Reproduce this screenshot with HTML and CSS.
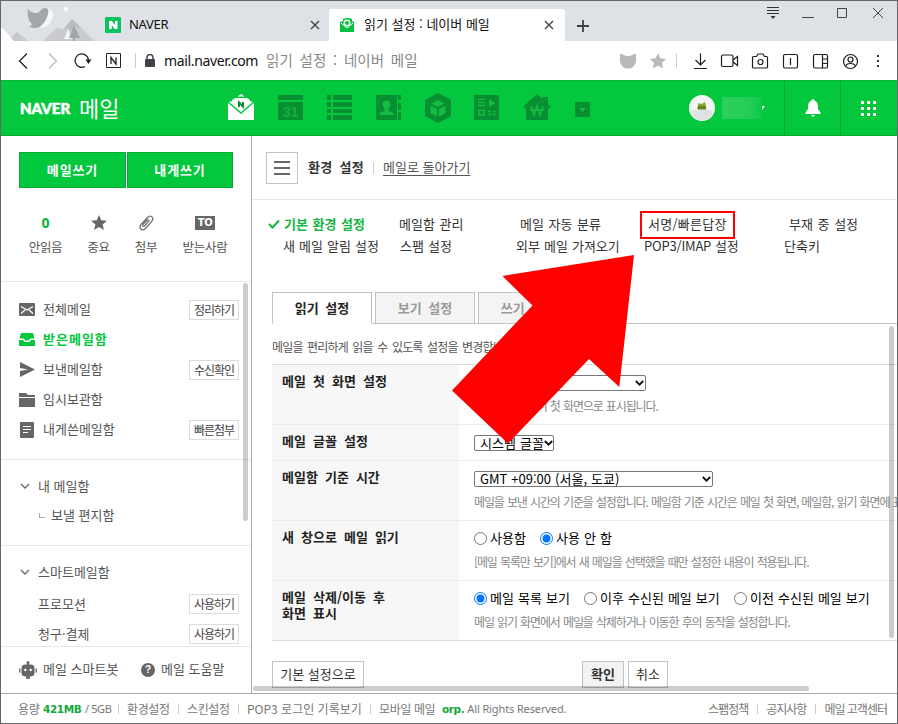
FILE: index.html
```html
<!DOCTYPE html>
<html lang="ko">
<head>
    <meta charset="UTF-8">
    <meta name="viewport" content="width=device-width, initial-scale=1.0">
    <title>읽기 설정 : 네이버 메일</title>
    <link rel="stylesheet" href="styles.css">
</head>
<body>
<div class="window">

    <!-- 탭 -->
    <div class="tabbar">
        <svg class="skin" width="98" height="40" viewBox="1 1 98 40">
            <path d="M1 27L15 41H1z" fill="#fff"/>
            <path d="M11 38l6-6 11 9H14z" fill="#c6c8cc"/>
            <path d="M43 41l15-14 5 3 9-11 23 22z" fill="#c9cbd0"/>
            <path d="M63 30l9-11 10 10-7-3-4 5-3-4z" fill="#b9bcc1"/>
            <path d="M64 39l4-10 4 10z" fill="#f5f5f6"/>
            <path d="M69 38l5-13 6 13h-5v3h-2v-3z" fill="#a3a6ab"/>
            <circle cx="66" cy="9" r="2" fill="#fff"/>
            <path d="M45 8c4 0 8 2 8 7 0 7-6 13-14 13 4-4 8-10 6-20z" fill="#f7f7f8"/>
            <path d="M28 9c3 4 8 5 11 3 2-1 2-4 6-4 3 0 4 2 3 6-2 8-7 14-13 14-3 0-5-1-6-2 2 0 3-1 3-2-4-4-5-9-4-15z" fill="#a4a7aa"/>
        </svg>
        <div class="tab tab-first">
            <svg width="16" height="16" viewBox="0 0 16 16"><rect width="16" height="16" rx="1" fill="#0bc162"/><path d="M4 4h3l3 4V4h2.500v8H9.500L6.800 8v4H4z" fill="#fff"/></svg>
            <span class="tab-title">NAVER</span>
            <svg class="close" width="10" height="10" viewBox="0 0 10 10"><path d="M1 1l8 8M9 1L1 9"/></svg>
        </div>
        <div class="tab tab-active">
            <svg width="14" height="14" viewBox="0 0 14 14"><path d="M0 4l3-1V1l3-1h3l3 1v2l2 1v10H0z" fill="#05c13f"/><path d="M1 5l6 5 6-5" fill="none" stroke="#fff"/><circle cx="7" cy="5" r="2.700" fill="#05c13f" stroke="#fff" stroke-width="1.500"/></svg>
            <span class="tab-title">읽기 설정 : 네이버 메일</span>
            <svg class="close" width="10" height="10" viewBox="0 0 10 10"><path d="M1 1l8 8M9 1L1 9"/></svg>
        </div>
        <svg class="newtab" width="12" height="12" viewBox="0 0 12 12"><path d="M6 0v12M0 6h12" stroke="#3c3f43" stroke-width="1.800"/></svg>
        <div class="winbuttons">
            <svg width="12" height="12" viewBox="0 0 12 12"><path d="M0 .5h12M0 3.500h12M0 6.500h12" stroke="#333"/><path d="M3.500 9h5L6 12z" fill="#333"/></svg>
            <svg width="12" height="12" viewBox="0 0 12 12"><path d="M0 10.500h12" stroke="#444"/></svg>
            <svg width="10" height="10" viewBox="0 0 10 10"><path d="M.5.500h9v9h-9z" fill="none" stroke="#444"/></svg>
            <svg width="10" height="10" viewBox="0 0 10 10"><path d="M0 0l10 10M10 0L0 10" stroke="#444"/></svg>
        </div>
    </div>

    <!-- 주소창 -->
    <div class="address">
        <svg class="nav-icons" width="108" height="18" viewBox="0 0 108 18">
            <g fill="none" stroke="#222" stroke-width="1.300">
                <path d="M9 1.500L1.500 9 9 16.500"/>
                <path d="M31 1.500L38.500 9 31 16.500" stroke="#bbb"/>
                <path d="M67 14.500A6.700 6.700 0 1 1 70.500 9"/>
                <path d="M88.500 1.500h14v14h-14z" stroke-width="1"/>
                <path d="M93 12V5.500l5 6.500V5.500"/>
            </g>
            <path d="M67.500 7.500h6l-3 4.500z" fill="#222"/>
        </svg>
        <i class="vline"></i>
        <svg class="lock" width="10" height="13" viewBox="0 0 10 13"><rect y="5" width="10" height="8" rx="1" fill="#3f4349"/><path d="M2 6V3.500a3 3 0 0 1 6 0V6" fill="none" stroke="#3f4349" stroke-width="1.500"/></svg>
        <span class="host">mail.naver.com</span>
        <span class="page-title">읽기 설정 : 네이버 메일</span>
        <svg class="tools" width="264" height="18" viewBox="0 0 264 18">
            <g fill="#b9b9b9">
                <path d="M0 2.500Q1 1.500 2 2l4 2h4l4-2q1-.5 2 .5v6c0 4-3 7.500-6 8H6c-3-.500-6-4-6-8z"/>
                <path d="M38 1l2.400 5.300 5.800.6-4.300 3.800 1.200 5.800-5.100-3-5.100 3 1.200-5.800-4.300-3.800 5.800-.6z"/>
            </g>
            <path d="M56.500 1.500v15" stroke="#ccc"/>
            <g fill="none" stroke="#1d1d1d" stroke-width="1.200">
                <path d="M80.500 1.500v11M75.500 8l5 5 5-5M74 16.500h13"/>
                <rect x="101.500" y="3" width="11.500" height="11.500" rx="1.500"/><path d="M113 8l4.500-3.500v9L113 10"/>
                <path d="M132.500 5.500q0-1 1-1h3l1.500-2.500h5l1.500 2.500h2q1 0 1 1v9.500q0 1-1 1h-13q-1 0-1-1z"/><circle cx="140.500" cy="10" r="2.500"/>
                <rect x="163.500" y="2.500" width="14" height="13.500" rx="1.500"/><path d="M170.500 6v7"/>
                <rect x="193.500" y="2.500" width="14" height="13.500" rx="1.500"/><path d="M202.500 2.500V16M202.500 7h5M202.500 11.500h5"/>
                <circle cx="230.500" cy="9.500" r="7"/><circle cx="230.500" cy="7.500" r="2.500"/><path d="M225.500 14.500c1-4 9-4 10 0"/>
            </g>
            <path d="M257 3h2v2h-2zM257 8h2v2h-2zM257 13h2v2h-2z" fill="#333"/>
        </svg>
    </div>

    <!-- 상단 메뉴 -->
    <div class="gnb">
        <span class="logo">NAVER</span>
        <span class="logo-mail">메일</span>
        <div class="services">
            <svg class="mail" width="26" height="28" viewBox="0 0 26 28">
                <path d="M0 9l3-2 10 9 10-9 3 2v17H0z" fill="#fff"/>
                <path d="M4 6l3-2h12l3 2v2l-9 9-9-9z" fill="#fff"/><path d="M9.500 2.500L13 0l3.500 2.500z" fill="#fff"/>
                <path d="M0 8l13 11L26 8" fill="none" stroke="#03c73c" stroke-width="1.500"/>
                <path d="M11 13V8.500l4 4V8" fill="none" stroke="#078e30" stroke-width="2"/>
            </svg>
            <svg class="dark" width="26" height="28" viewBox="0 0 26 28"><path d="M0 1h25v5H0zM0 8h25v18H0z"/><text x="12.500" y="22.500" text-anchor="middle" class="cal-day">31</text></svg>
            <svg class="dark" width="26" height="28" viewBox="0 0 26 28"><path d="M0 1h4v5H0zM6 1h19v5H6zM0 8h4v5H0zM6 8h19v5H6zM0 15h4v4H0zM6 15h19v4H6zM0 21h4v5H0zM6 21h19v5H6z"/></svg>
            <svg class="dark" width="26" height="28" viewBox="0 0 26 28"><path d="M0 1h21v25H0zM22 1h3v5h-3zM22 9h3v7h-3zM22 18h3v8h-3z"/><path class="light" d="M10.500 6.500c5 0 4.500 6 2 8.500v2l5 2v2h-14v-2l5-2v-2C6 12.500 5.500 6.500 10.500 6.500z"/></svg>
            <svg class="dark" width="26" height="28" viewBox="0 0 26 28"><path d="M13-1l13 7v16l-13 7-13-7V6z"/><path class="light" d="M13 6l6.500 3.500L13 13 6.500 9.500zM5.500 11.500L12 15v7.500L5.500 19zM20.500 11.500L14 15v7.500l6.500-3.500z"/></svg>
            <svg class="dark" width="26" height="28" viewBox="0 0 26 28"><path d="M0 1h25v25H0z"/><path d="M4 5.500h7M4 8.500h7M4 11.500h7M14 17.500h3M18.500 17.500h3M14 20.500h3M18.500 20.500h3M5 16.500h5v4.500H5z" fill="none" stroke="#15bb42" stroke-width="1.700"/><path d="M15 5v8l6.500-4z" class="light"/></svg>
            <svg class="dark" width="28" height="28" viewBox="0 0 28 28"><path d="M14 0l6 5V3h5v7l3 3-1 1.500h-2V26H3V14.500H1L0 13z"/><path d="M8 12l3 9 3-9 3 9 3-9M7 16h14" fill="none" stroke="#12b83f" stroke-width="1.800"/></svg>
            <svg class="dark more" width="15" height="15" viewBox="0 0 15 15"><path d="M0 0h15v15H0z"/><path class="light" d="M4 6h7l-3.500 4z"/></svg>
        </div>
        <div class="profile">
            <svg width="26" height="26" viewBox="0 0 26 26"><circle cx="13" cy="13" r="13" fill="#f4f5f5"/><path d="M2 16q11-3 22 0-2 9-11 9T2 16z" fill="#dfe2e2"/><path d="M8 14l1.500-6 3 1 3.500-2 1.500 7z" fill="#8aa52c"/><path d="M9 11h8v3.500H9z" fill="#68832a"/></svg>
            <span class="nick"></span>
            <svg class="caret" width="3" height="4" viewBox="0 0 3 4"><path d="M0 0h3L0 4z" fill="#fff"/></svg>
        </div>
        <div class="gnb-cell"><svg width="16" height="18" viewBox="0 0 16 18"><path d="M6.500 1.500h3C13 3 13 6 13 10l2.500 3.500V15H.5v-1.500L3 10c0-4 0-7 3.500-8.500zM6 16h4l-1 1.500H7z" fill="#fff"/><circle cx="8" cy="1.500" r="1.500" fill="#fff"/></svg></div>
        <div class="gnb-cell"><svg width="15" height="15" viewBox="0 0 15 15"><path d="M0 0h3v3H0zM6 0h3v3H6zM12 0h3v3h-3zM0 6h3v3H0zM6 6h3v3H6zM12 6h3v3h-3zM0 12h3v3H0zM6 12h3v3H6zM12 12h3v3h-3z" fill="#fff"/></svg></div>
    </div>

    <div class="content">
        <!-- 왼쪽 메뉴 -->
        <div class="side">
            <div class="write">
                <a class="write-btn">메일쓰기</a>
                <a class="write-btn">내게쓰기</a>
            </div>
            <div class="quick">
                <div class="quick-item q1"><b>0</b><span>안읽음</span></div>
                <div class="quick-item q2"><svg width="16" height="16" viewBox="0 0 16 16"><path d="M8 0l2.200 5.300 5.800.4-4.400 3.700L13 15l-5-3-5 3 1.400-5.600L0 5.700l5.800-.4z" fill="#666"/></svg><span>중요</span></div>
                <div class="quick-item q3"><svg width="15" height="16" viewBox="0 0 15 16"><path d="M2.500 9l6-6.500c3-3 7 0 4.500 3.500l-6.500 7.500c-3 3-7.500 0-4.500-4l6-6.500M10.500 5l-5 6c-1 1-2.500 0-1.500-1.500L9 4" fill="none" stroke="#777" stroke-width="1.300"/></svg><span>첨부</span></div>
                <div class="quick-item q4"><i class="to">TO</i><span>받는사람</span></div>
            </div>
            <div class="folders">
                <div class="folder"><svg width="16" height="13" viewBox="0 0 16 13"><rect width="16" height="13" rx="1" fill="#666"/><path d="M2 3.500l6 3.500 6-3.500M2 10.500L6 7M14 10.500L10 7" fill="none" stroke="#fff" stroke-width="1.200"/></svg><span>전체메일</span><a class="mini">정리하기</a></div>
                <div class="folder on"><svg width="16" height="13" viewBox="0 0 16 13"><path d="M2 0h12l1.500 5.500H11l-1 2H6l-1-2H.5zM0 7h4l1.500 2h5L12 7h4v6H0z" fill="#03c73c"/></svg><span>받은메일함</span></div>
                <div class="folder"><svg width="16" height="15" viewBox="0 0 16 15"><path d="M1 0l15 7.500L1 15V9l8-1.500L1 6z" fill="#666"/></svg><span>보낸메일함</span><a class="mini">수신확인</a></div>
                <div class="folder"><svg width="16" height="14" viewBox="0 0 16 14"><path d="M0 0h7l2 2h7v2H0zM0 5h16v9H0z" fill="#666"/></svg><span>임시보관함</span></div>
                <div class="folder"><svg width="16" height="16" viewBox="0 0 16 16"><rect x="1" width="14" height="16" rx="1" fill="#666"/><path d="M4 4.500h8M4 7.500h8M4 10.500h5" stroke="#fff" stroke-width="1.200"/></svg><span>내게쓴메일함</span><a class="mini">빠른첨부</a></div>
            </div>
            <div class="group mine">
                <div class="group-head"><svg width="10" height="6" viewBox="0 0 10 6"><path d="M1 1l4 4 4-4"/></svg><span>내 메일함</span></div>
                <div class="group-sub"><i class="branch"></i><span>보낼 편지함</span></div>
            </div>
            <div class="group smart">
                <div class="group-head"><svg width="10" height="6" viewBox="0 0 10 6"><path d="M1 1l4 4 4-4"/></svg><span>스마트메일함</span></div>
                <div class="group-item"><span>프로모션</span><a class="mini">사용하기</a></div>
                <div class="group-item"><span>청구·결제</span><a class="mini">사용하기</a></div>
            </div>
            <div class="side-bottom">
                <svg width="18" height="18" viewBox="0 0 18 18"><path d="M8 2h2v2H8z" fill="#666"/><circle cx="9" cy="1.500" r="1.500" fill="#666"/><rect x="2.500" y="3.500" width="13" height="12" rx="4" fill="#666"/><path d="M0 7.500h1.500v4H0zM16.500 7.500H18v4h-1.500zM7 15h4v3H7z" fill="#777"/><circle cx="6.300" cy="9" r="1.200" fill="#fff"/><circle cx="11.700" cy="9" r="1.200" fill="#fff"/></svg>
                <span class="bot">메일 스마트봇</span>
                <i class="help">?</i>
                <span>메일 도움말</span>
            </div>
            <i class="scroll scroll-side"></i>
        </div>

        <!-- 환경 설정 -->
        <div class="main">
            <div class="main-head">
                <a class="burger"><i></i><i></i><i></i></a>
                <h1>환경 설정</h1>
                <i class="vline"></i>
                <a class="back">메일로 돌아가기</a>
            </div>
            <div class="menu">
                <div class="menu-row row1">
                    <a class="current"><svg width="12" height="10" viewBox="0 0 12 10"><path d="M1 5l3.500 3.500L11 1.500" fill="none" stroke="#14b541" stroke-width="2"/></svg>기본 환경 설정</a>
                    <a>메일함 관리</a>
                    <a>메일 자동 분류</a>
                    <a><span class="marked">서명/빠른답장</span></a>
                    <a>부재 중 설정</a>
                </div>
                <div class="menu-row row2">
                    <a>새 메일 알림 설정</a>
                    <a>스팸 설정</a>
                    <a>외부 메일 가져오기</a>
                    <a class="pop">POP3/IMAP 설정</a>
                    <a>단축키</a>
                </div>
            </div>
            <div class="tabs">
                <a class="tabs-item tabs-on">읽기 설정</a>
                <a class="tabs-item">보기 설정</a>
                <a class="tabs-item">쓰기 설정</a>
            </div>
            <p class="desc">메일을 편리하게 읽을 수 있도록 설정을 변경합니다.</p>
            <div class="settings">
                <div class="set-row tall">
                    <div class="set-name">메일 첫 화면 설정</div>
                    <div class="set-body">
                        <div class="control"><span class="select s-first">받은메일함<svg width="9" height="6" viewBox="0 0 9 6"><path d="M.8 1l3.700 3.700L8.200 1"/></svg></span></div>
                        <p>선택한 메일함이 첫 화면으로 표시됩니다.</p>
                    </div>
                </div>
                <div class="set-row">
                    <div class="set-name">메일 글꼴 설정</div>
                    <div class="set-body">
                        <div class="control"><span class="select s-font">시스템 글꼴<svg width="9" height="6" viewBox="0 0 9 6"><path d="M.8 1l3.700 3.700L8.200 1"/></svg></span></div>
                    </div>
                </div>
                <div class="set-row tall">
                    <div class="set-name">메일함 기준 시간</div>
                    <div class="set-body">
                        <div class="control"><span class="select s-time">GMT +09:00 (서울, 도쿄)<svg width="9" height="6" viewBox="0 0 9 6"><path d="M.8 1l3.700 3.700L8.200 1"/></svg></span></div>
                        <p>메일을 보낸 시간의 기준을 설정합니다. 메일함 기준 시간은 메일 첫 화면, 메일함, 읽기 화면에 표시됩니다.</p>
                    </div>
                </div>
                <div class="set-row tall">
                    <div class="set-name">새 창으로 메일 읽기</div>
                    <div class="set-body">
                        <div class="control">
                            <label class="r-use"><input type="radio" name="newwin">사용함</label>
                            <label><input type="radio" name="newwin" checked>사용 안 함</label>
                        </div>
                        <p>[메일 목록만 보기]에서 새 메일을 선택했을 때만 설정한 내용이 적용됩니다.</p>
                    </div>
                </div>
                <div class="set-row tall">
                    <div class="set-name">메일 삭제/이동 후<br>화면 표시</div>
                    <div class="set-body">
                        <div class="control">
                            <label class="r-list"><input type="radio" name="after" checked>메일 목록 보기</label>
                            <label class="r-next"><input type="radio" name="after">이후 수신된 메일 보기</label>
                            <label><input type="radio" name="after">이전 수신된 메일 보기</label>
                        </div>
                        <p>메일 읽기 화면에서 메일을 삭제하거나 이동한 후의 동작을 설정합니다.</p>
                    </div>
                </div>
            </div>
            <div class="buttons">
                <a class="btn btn-reset">기본 설정으로</a>
                <a class="btn btn-ok">확인</a>
                <a class="btn btn-cancel">취소</a>
            </div>
            <i class="scroll scroll-main"></i>
            <i class="scroll scroll-bottom"></i>
        </div>
    </div>

    <div class="footer">
        <span class="f-cap">용량</span><b class="f-used">421MB</b><span class="f-total">/ 5GB</span>
        <a class="bar f-env">환경설정</a>
        <a class="bar f-env">스킨설정</a>
        <a class="bar f-pop">POP3 로그인 기록보기</a>
        <a class="bar f-mobile">모바일 메일</a>
        <b class="f-corp">orp.</b><span class="f-rights">All Rights Reserved.</span>
        <div class="policy">
            <a>스팸정책</a>
            <a class="bar">공지사항</a>
            <a class="bar f-center">메일 고객센터</a>
        </div>
    </div>

    <svg class="arrow" width="184" height="190" viewBox="451 254 184 190"><path d="M634 255L619.300 387 589 359 508 443.500 452 390.500 532.500 305.500 502.500 276z" fill="#f00"/></svg>
</div>
</body>
</html>
```

FILE: styles.css
```css
* {
    box-sizing: border-box;
}
body {
    margin: 0;
    font-family: "Noto Sans CJK KR", sans-serif;
    font-size: 13px;
    line-height: 20px;
    color: #333;
    background: #fff;
    overflow: hidden;
}
svg {
    display: block;
    flex: none;
}
i {
    font-style: normal;
}
p, h1 {
    margin: 0;
}
a, span, label {
    white-space: nowrap;
}
.window {
    position: relative;
    display: flex;
    flex-direction: column;
    width: 898px;
    height: 724px;
    border: 1px solid #65656b;
    overflow: hidden;
}

/* 탭 */
.tabbar {
    display: flex;
    height: 40px;
    background: #dee1e6;
}
.tab {
    display: flex;
    align-items: center;
    height: 32px;
    margin-top: 8px;
    color: #111;
}
.tab-first {
    width: 231px;
    padding: 0 10px 0 6px;
}
.tab-active {
    width: 236px;
    margin-left: -1px;
    padding: 0 11px;
    background: #fff;
    border-radius: 3px 3px 0 0;
}
.tab-title {
    margin-left: 10px;
    padding-bottom: 2px;
    flex: 1;
}
.tab-first .tab-title {
    margin-left: 8px;
    font-family: "Noto Sans", sans-serif;
    letter-spacing: -0.3px;
}
.close path {
    stroke: #444;
    stroke-width: 1.4;
}
.newtab {
    margin: 19px 0 0 12px;
}
.winbuttons {
    display: flex;
    flex: 1;
    justify-content: flex-end;
    gap: 23px;
    padding: 6px 14px 0 0;
}
.winbuttons svg:nth-child(3) {
    margin-top: 1px;
}
.winbuttons svg:nth-child(4) {
    margin-top: 1px;
    margin-left: 3px;
}

/* 주소창 */
.address {
    display: flex;
    align-items: center;
    height: 39px;
    padding-left: 17px;
}
.vline {
    width: 1px;
    height: 15px;
    background: #ccc;
}
.address .vline {
    margin-left: 9px;
}
.lock {
    margin-left: 9px;
}
.host {
    width: 94px;
    margin-left: 9px;
    font-family: "Noto Sans", sans-serif;
    font-size: 14px;
    letter-spacing: -0.35px;
    color: #111;
}
.page-title {
    margin-left: 8px;
    padding-bottom: 2px;
    font-size: 14.5px;
    letter-spacing: 0.1px;
    word-spacing: 2.5px;
    color: #888;
}
.tools {
    margin-left: auto;
    margin-right: 13px;
}

/* 상단 메뉴 */
.gnb {
    display: flex;
    align-items: center;
    height: 56px;
    padding-right: 1px;
    background: #03c73c;
    border-top: 1px solid #09b53c;
    border-bottom: 1px solid #05a833;
    color: #fff;
}
.logo {
    width: 53px;
    margin-left: 19px;
    font-family: "Lato", sans-serif;
    font-size: 15px;
    font-weight: 900;
    -webkit-text-stroke: 0.6px #fff;
}
.logo-mail {
    width: 40px;
    margin-left: 6px;
    padding-bottom: 2px;
    font-size: 22px;
}
.services {
    display: flex;
    align-items: center;
    gap: 23px;
    margin-left: 109px;
}
.mail {
    margin-right: 1px;
}
.dark {
    fill: #078f31;
    overflow: visible;
}
.light {
    fill: #16bb43;
}
.cal-day {
    fill: #12b23f;
    font: bold 14px "Liberation Sans", sans-serif;
}
.more {
    margin: 3px 0 0 1px;
}
.profile {
    display: flex;
    align-items: center;
    width: 95px;
    margin-left: auto;
}
.nick {
    width: 40px;
    height: 22px;
    margin-left: 7px;
    background: linear-gradient(90deg, #2ccf5c, #25cd57 70%, #0ac842);
}
.gnb-cell {
    display: flex;
    align-items: center;
    justify-content: center;
    width: 56px;
    height: 54px;
    border-left: 1px solid #05a833;
}

.content {
    display: flex;
    height: 557px;
}

/* 왼쪽 메뉴 */
.side {
    position: relative;
    flex: none;
    width: 251px;
    border-right: 1px solid #aaa;
    color: #555;
}
.write {
    display: flex;
    gap: 1px;
    padding: 16px 0 0 18px;
}
.write-btn {
    width: 107px;
    height: 36px;
    border: 1px solid #08a936;
    background: #03c73c;
    color: #fff;
    font-weight: bold;
    line-height: 34px;
    letter-spacing: 0.9px;
    text-align: center;
}
.write-btn + .write-btn {
    width: 106px;
}
.quick {
    display: flex;
    height: 94px;
    padding: 26px 0 0 18px;
    border-bottom: 1px solid #e8e8e8;
}
.quick-item {
    display: flex;
    flex-direction: column;
    align-items: center;
}
.quick-item > :first-child {
    height: 18px;
}
.quick-item span {
    margin-top: 5px;
    font-size: 12.5px;
    letter-spacing: -0.3px;
}
.q1 {
    width: 53px;
}
.q2 {
    width: 53px;
}
.q3 {
    width: 42px;
}
.q4 {
    width: 76px;
}
.quick-item b {
    color: #08b537;
    font-family: "Noto Sans", sans-serif;
    font-size: 14px;
    line-height: 18px;
}
.quick-item .to {
    width: 20px;
    height: 14px;
    margin: 2px 0;
    background: #666;
    color: #fff;
    font: bold 10px/14px "DejaVu Sans", sans-serif;
    letter-spacing: -0.3px;
    text-align: center;
}
.folders {
    height: 178px;
    padding-top: 13px;
    border-bottom: 1px solid #e8e8e8;
}
.folder {
    display: flex;
    align-items: center;
    height: 30px;
    padding: 0 12px 0 18px;
}
.folder svg {
    margin-bottom: 1px;
}
.folder span {
    margin-left: 8px;
    padding-bottom: 2px;
}
.on {
    color: #03c73c;
    font-weight: bold;
    letter-spacing: 1px;
}
.mini {
    width: 50px;
    height: 20px;
    margin-left: auto;
    border: 1px solid #ddd;
    font-size: 12px;
    line-height: 17px;
    letter-spacing: -1px;
    text-align: center;
    color: #444;
}
.group {
    border-bottom: 1px solid #e8e8e8;
}
.mine {
    height: 86px;
    padding-top: 11px;
}
.smart {
    height: 101px;
    padding-top: 11px;
}
.group-head, .group-sub, .group-item {
    display: flex;
    align-items: center;
    height: 30px;
}
.group-head {
    padding-left: 19px;
}
.group-head path {
    fill: none;
    stroke: #666;
    stroke-width: 1.3;
}
.group-head span {
    margin-left: 8px;
}
.group-sub {
    padding: 0 0 2px 38px;
}
.branch {
    width: 6px;
    height: 5px;
    border-left: 1px solid #aaa;
    border-bottom: 1px solid #aaa;
}
.group-sub span {
    margin-left: 6px;
}
.group-item {
    padding: 0 12px 0 37px;
}
.group-head + .group-item {
    margin-top: 2px;
}
.side-bottom {
    display: flex;
    align-items: center;
    height: 46px;
    padding-left: 18px;
}
.side-bottom span {
    margin-left: 6px;
    padding-bottom: 2px;
}
.bot {
    width: 77px;
}
.help {
    width: 14px;
    height: 14px;
    margin-left: 21px;
    border-radius: 50%;
    background: #666;
    color: #fff;
    font: bold 10px/14px "Liberation Sans", sans-serif;
    text-align: center;
}
.scroll {
    position: absolute;
    border-radius: 3px;
    background: rgba(0, 0, 0, 0.2);
}
.scroll-side {
    left: 242px;
    top: 147px;
    width: 5px;
    height: 238px;
}
.scroll-main {
    right: 3px;
    top: 190px;
    width: 5px;
    height: 312px;
}
.scroll-bottom {
    left: 1px;
    top: 550px;
    width: 556px;
    height: 5px;
}

/* 환경 설정 */
.main {
    position: relative;
    width: 645px;
    overflow: hidden;
}
.main-head {
    display: flex;
    align-items: center;
    height: 64px;
    padding-left: 14px;
    border-bottom: 1px solid #e5e5e5;
}
.burger {
    display: flex;
    flex-direction: column;
    gap: 4px;
    width: 32px;
    height: 32px;
    padding: 8px 7px;
    border: 1px solid #c3c3c3;
}
.burger i {
    flex: none;
    height: 2px;
    background: #666;
}
.main-head h1 {
    width: 57px;
    margin-left: 10px;
    padding-bottom: 2px;
    font-size: 13px;
    letter-spacing: 0.3px;
    word-spacing: 3px;
    white-space: nowrap;
}
.main-head .vline {
    height: 12px;
    margin-left: 8px;
}
.back {
    margin-left: 9px;
    padding-bottom: 2px;
    color: #555;
    text-decoration: underline;
    text-underline-offset: 3px;
}
.menu {
    height: 92px;
    padding-top: 14px;
}
.menu-row {
    display: grid;
    height: 20px;
}
.row1 {
    grid-template-columns: 131px 121px 128px 141px auto;
    height: 22px;
    padding: 0 0 2px 16px;
    word-spacing: 1px;
}
.row2 {
    grid-template-columns: 117px 116px 128px 140px auto;
    padding-left: 31px;
    word-spacing: 0.4px;
}
.current {
    display: flex;
    align-items: center;
    gap: 4px;
    color: #14b541;
    font-weight: bold;
}
.marked {
    margin-left: -8px;
    padding: 1px 6px 4px;
    border: 2px solid #f00;
    letter-spacing: 0.25px;
}
.pop {
    letter-spacing: -0.2px;
}
.tabs {
    display: flex;
    gap: 3px;
    height: 32px;
    padding-left: 20px;
    background: linear-gradient(#c3c3c3, #c3c3c3) 20px 31px / 100% 1px no-repeat;
}
.tabs-item {
    width: 100px;
    height: 32px;
    border: 1px solid #c3c3c3;
    background: #f4f4f4;
    color: #999;
    font-weight: bold;
    line-height: 29px;
    text-align: center;
    word-spacing: 3px;
}
.tabs-on {
    border-bottom-color: #fff;
    background: #fff;
    color: #222;
}
.desc {
    height: 40px;
    padding: 13px 0 0 20px;
    color: #555;
}
.desc, .set-body p {
    font-size: 12px;
    letter-spacing: -0.85px;
    word-spacing: 2px;
    white-space: nowrap;
}
.settings {
    margin-left: 20px;
    border-top: 1px solid #ddd;
    border-bottom: 1px solid #ddd;
}
.set-row {
    display: flex;
    height: 36px;
}
.tall {
    height: 60px;
}
.set-row + .set-row {
    border-top: 1px solid #ededed;
}
.set-row:first-child {
    height: 59px;
}
.set-name {
    flex: none;
    width: 187px;
    padding: 8px 0 0 10px;
    background: #f7f7f7;
    color: #222;
    font-weight: bold;
    line-height: 16px;
    word-spacing: 3.4px;
}
.set-body {
    padding: 8px 0 0 15px;
}
.set-body p {
    margin-top: 3px;
    letter-spacing: -1.13px;
    word-spacing: 1px;
    color: #888;
}
.control {
    display: flex;
    align-items: center;
    height: 20px;
    color: #000;
    word-spacing: 0.4px;
}
.select {
    display: flex;
    align-items: center;
    justify-content: space-between;
    height: 16px;
    padding: 0 1px 0 5px;
    border: 1px solid #767676;
    border-radius: 2px;
    line-height: 12px;
}
.select path {
    fill: none;
    stroke: #111;
    stroke-width: 1.8;
}
.s-first {
    width: 172px;
}
.s-font {
    width: 80px;
}
.s-time {
    width: 239px;
}
.control label {
    display: flex;
    align-items: center;
    margin-bottom: 2px;
}
.control input {
    width: 13px;
    height: 13px;
    margin: 0 3px 0 0;
}
.r-use {
    width: 66px;
}
.r-list {
    width: 110px;
}
.r-next {
    width: 150px;
}
.buttons {
    display: flex;
    padding: 20px 0 0 20px;
}
.btn {
    height: 27px;
    border: 1px solid #c3c3c3;
    line-height: 24px;
    text-align: center;
}
.btn-reset {
    width: 92px;
}
.btn-ok {
    width: 42px;
    margin-left: 218px;
    background: #f2f2f2;
    font-weight: bold;
}
.btn-cancel {
    width: 40px;
    margin-left: 4px;
}

.footer {
    display: flex;
    align-items: center;
    height: 30px;
    padding-left: 17px;
    border-top: 1px solid #aaa;
    color: #777;
    font-size: 12px;
    letter-spacing: -0.4px;
}
.f-cap {
    width: 25px;
}
.f-used, .f-corp {
    color: #14a83c;
    font-family: "DejaVu Sans", sans-serif;
    font-size: 10.5px;
}
.f-used {
    width: 42px;
}
.f-total {
    width: 33px;
    font-family: "Noto Sans", sans-serif;
    font-size: 11px;
}
.bar::before {
    content: "";
    display: inline-block;
    width: 1px;
    height: 10px;
    margin-right: 8px;
    background: #ccc;
}
.f-env {
    width: 60px;
}
.f-pop {
    width: 132px;
    letter-spacing: 0;
}
.f-mobile {
    width: 72px;
}
.f-rights {
    margin-left: 3px;
    font-family: "Noto Sans", sans-serif;
    font-size: 11px;
    letter-spacing: -0.12px;
}
.policy {
    display: flex;
    gap: 9px;
    margin-left: auto;
    padding-right: 10px;
    letter-spacing: -1px;
}

.arrow {
    position: absolute;
    left: 450px;
    top: 253px;
}
```
